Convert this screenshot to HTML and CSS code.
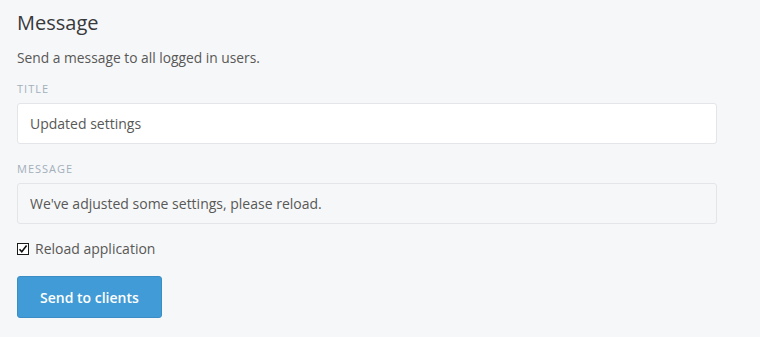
FILE: index.html
```html
<!DOCTYPE html>
<html lang="en">
<head>
    <meta charset="UTF-8">
    <title>Message</title>
    <link rel="stylesheet" href="styles.css">
</head>
<body>
    <div class="page">
        <h2>Message</h2>
        <p class="intro">Send a message to all logged in users.</p>

        <div class="field">
            <label for="msgTitle">Title</label>
            <input type="text" id="msgTitle" value="Updated settings">
        </div>

        <div class="field">
            <label for="msgBody">Message</label>
            <input type="text" id="msgBody" class="soft" value="We've adjusted some settings, please reload.">
        </div>

        <label class="check">
            <input type="checkbox" checked>
            <svg class="box" width="12" height="12" viewBox="0 0 12 12">
                <rect x="0.5" y="0.5" width="11" height="11" fill="#fff" stroke="#1a1a1a"/>
                <path d="M2.5 6.2 L4.8 8.8 L9.6 2.6" fill="none" stroke="#111" stroke-width="1.6"/>
            </svg>
            Reload application
        </label>

        <button class="btn">Send to clients</button>
    </div>
</body>
</html>
```

FILE: styles.css
```css
body {
    margin: 0;
    background-color: #f6f7f9;
    color: #585856;
    font-family: "Open Sans", "Noto Sans", sans-serif;
    font-size: 14px;
}
.page {
    width: 700px;
    padding: 0 17px;
}
h2 {
    margin: 0;
    padding-top: 9px;
    font-size: 20px;
    font-weight: normal;
    line-height: 28px;
    color: #38393b;
}
.intro {
    margin: 11px 0 0;
    line-height: 20px;
    font-size: 13.8px;
}
.field {
    margin-top: 13px;
}
.field label {
    display: block;
    font-size: 11px;
    letter-spacing: 1px;
    text-transform: uppercase;
    color: #a3afb9;
    line-height: 16px;
    margin-bottom: 6px;
}
.field input {
    box-sizing: border-box;
    display: block;
    width: 100%;
    height: 41px;
    padding: 0 12px;
    border: 1px solid #e3e5e8;
    border-radius: 3px;
    background: #fff;
    font: inherit;
    color: #585856;
}
.field input.soft {
    background: #f6f7f9;
}
.field + .field {
    margin-top: 17px;
}
.check {
    display: flex;
    align-items: center;
    gap: 6px;
    margin-top: 15px;
    line-height: 20px;
}
.check input {
    display: none;
}
.btn {
    display: block;
    margin-top: 17px;
    height: 42px;
    padding: 0 22px;
    background-color: #409bd6;
    color: #fff;
    border: 1px solid #3a8ec5;
    border-radius: 3px;
    font: inherit;
    font-weight: 600;
}
```
